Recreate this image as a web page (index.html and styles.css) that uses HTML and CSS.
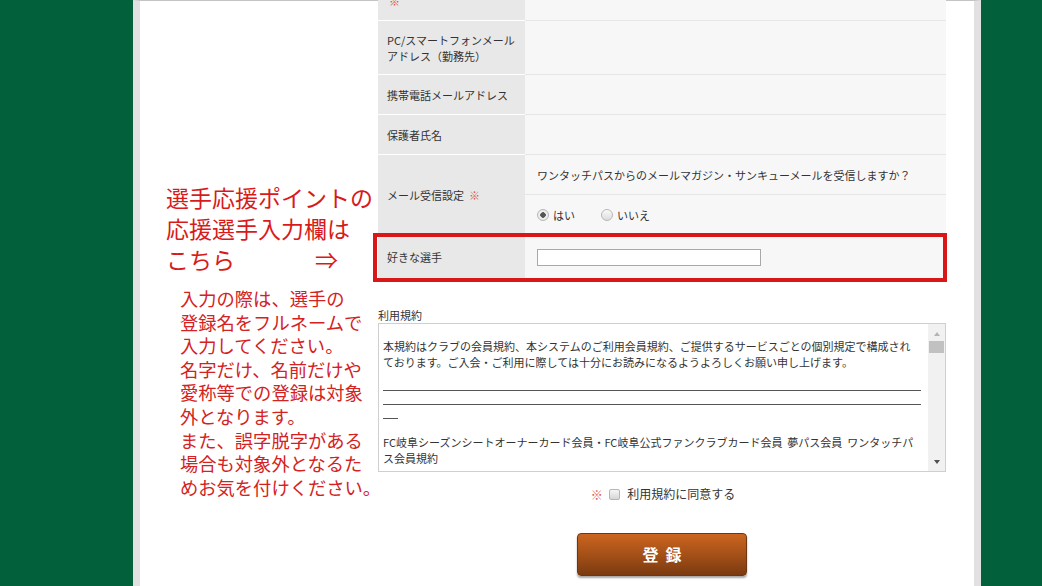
FILE: index.html
```html
<!DOCTYPE html>
<html lang="ja">
<head>
  <meta charset="utf-8">
  <title>会員登録</title>
  <link rel="stylesheet" href="styles.css">
</head>
<body>
  <div class="page">
    <div class="note">
      <p class="note-head">選手応援ポイントの<br>応援選手入力欄は<br>こちら<span class="arrow">⇒</span></p>
      <p class="note-body">入力の際は、選手の<br>登録名をフルネームで<br>入力してください。<br>名字だけ、名前だけや<br>愛称等での登録は対象<br>外となります。<br>また、誤字脱字がある<br>場合も対象外となるた<br>めお気を付けください。</p>
    </div>

    <div class="form">
      <div class="rows">
        <div class="row row-cut">
          <div class="th"><span class="req">※</span></div>
          <div class="td"></div>
        </div>
        <div class="row row-tall">
          <div class="th">PC/スマートフォンメール<br>アドレス（勤務先）</div>
          <div class="td"></div>
        </div>
        <div class="row">
          <div class="th">携帯電話メールアドレス</div>
          <div class="td"></div>
        </div>
        <div class="row">
          <div class="th">保護者氏名</div>
          <div class="td"></div>
        </div>
        <div class="row row-mail">
          <div class="th">メール受信設定<span class="req req-gap">※</span></div>
          <div class="td td-split">
            <div class="sub">ワンタッチパスからのメールマガジン・サンキューメールを受信しますか？</div>
            <div class="sub">
              <label class="radio"><input type="radio" name="mail" checked>はい</label>
              <label class="radio"><input type="radio" name="mail">いいえ</label>
            </div>
          </div>
        </div>
        <div class="row row-player">
          <div class="th">好きな選手</div>
          <div class="td"><input type="text" class="text-input"></div>
        </div>
      </div>

      <div class="terms-label">利用規約</div>
      <div class="terms">
        <div class="terms-text">
          <p class="terms-intro">本規約はクラブの会員規約、本システムのご利用会員規約、ご提供するサービスごとの個別規定で構成され<br>ております。ご入会・ご利用に際しては十分にお読みになるようよろしくお願い申し上げます。</p>
          <div class="rule"></div>
          <div class="rule"></div>
          <div class="rule rule-short"></div>
          <p class="terms-title">FC岐阜シーズンシートオーナーカード会員・FC岐阜公式ファンクラブカード会員&nbsp;&nbsp;夢パス会員&nbsp;&nbsp;ワンタッチパ<br>ス会員規約</p>
        </div>
        <div class="scrollbar">
          <span class="arrow-up"></span>
          <span class="thumb"></span>
          <span class="track"></span>
          <span class="arrow-down"></span>
        </div>
      </div>

      <div class="agree">
        <span class="req">※</span>
        <label><input type="checkbox" class="check">利用規約に同意する</label>
      </div>

      <button class="submit">登録</button>
    </div>
  </div>
</body>
</html>
```

FILE: styles.css
```css
body {
  margin: 0;
  height: 586px;
  overflow: hidden;
  background-color: #02613b;
  font-family: "Noto Sans CJK JP", "Liberation Sans", sans-serif;
  color: #333;
}
p {
  margin: 0;
}
.page {
  box-sizing: border-box;
  width: 848px;
  height: 586px;
  margin-left: 133px;
  background-color: #fff;
  border-left: 7px solid #e1e1e1;
  border-right: 7px solid #e1e1e1;
  border-top: 1px solid #c4c4c4;
  display: grid;
  grid-template-columns: 238px 568px;
}

/* left red notes */
.note {
  padding-top: 181px;
}
.note-head {
  margin-left: 26px;
  font-size: 23px;
  line-height: 31px;
  color: #d91a1a;
}
.arrow {
  margin-left: 80px;
}
.note-body {
  margin-top: 12px;
  margin-left: 40px;
  font-size: 18.3px;
  line-height: 23.6px;
  color: #d42222;
  white-space: nowrap;
}

/* form table */
.rows {
  margin-top: -20px;
}
.row {
  display: grid;
  grid-template-columns: 147px 421px;
  height: 40px;
  font-size: 11px;
}
.th {
  box-sizing: border-box;
  background-color: #e8e8e8;
  border-bottom: 1px solid #fff;
  padding-left: 9px;
  display: flex;
  align-items: center;
  line-height: 16px;
}
.td {
  box-sizing: border-box;
  background-color: #f7f7f7;
  border-bottom: 1px solid #e6e6e6;
  padding-left: 12px;
  display: flex;
  align-items: center;
}
.row-tall {
  height: 54px;
}
.row-mail {
  height: 80px;
}
.row-player {
  height: 45px;
  position: relative;
}
.row-player::after {
  content: "";
  position: absolute;
  left: -5px;
  right: -1px;
  top: -2px;
  bottom: -2px;
  border: 4px solid #d81818;
}
.req {
  color: #e05353;
  margin-left: 2px;
}
.req-gap {
  margin-left: 5px;
}
.td-split {
  display: block;
  padding-left: 0;
  border-bottom: none;
}
.sub {
  box-sizing: border-box;
  height: 40px;
  padding-left: 12px;
  display: flex;
  align-items: center;
  border-bottom: 1px solid #e6e6e6;
}
.radio {
  display: inline-flex;
  align-items: center;
  margin-right: 26px;
}
.radio input {
  appearance: none;
  width: 12px;
  height: 12px;
  margin: 0 4px 0 0;
  border: 1px solid #b8b8b8;
  border-radius: 50%;
  background: linear-gradient(#fafafa, #dcdcdc);
}
.radio input:checked {
  background: radial-gradient(circle, #555 0, #555 2.5px, #f2f2f2 3px, #dedede 100%);
}
.text-input {
  box-sizing: border-box;
  width: 224px;
  height: 17px;
  margin: 0;
  border: 1px solid #a9a9a9;
  background: #fff;
}

/* terms box */
.terms-label {
  margin-top: 28px;
  font-size: 11px;
  line-height: 15px;
}
.terms {
  box-sizing: border-box;
  height: 149px;
  display: flex;
  border: 1px solid #cfcfcf;
}
.terms-text {
  flex: 1;
  overflow: hidden;
  padding: 0 7px 0 4px;
  font-size: 11px;
  line-height: 16px;
  white-space: nowrap;
}
.terms-intro {
  margin-top: 14px;
}
.rule {
  border-top: 1px solid #555;
  margin-top: 13px;
}
.rule:first-of-type {
  margin-top: 20px;
}
.rule-short {
  width: 15px;
}
.terms-title {
  margin-top: 15px;
}
.scrollbar {
  width: 17px;
  background-color: #f1f1f1;
  display: flex;
  flex-direction: column;
  align-items: center;
  padding: 8px 0 7px;
  box-sizing: border-box;
}
.arrow-up {
  width: 0;
  height: 0;
  border-left: 3.5px solid transparent;
  border-right: 3.5px solid transparent;
  border-bottom: 4px solid #b4b4b4;
}
.thumb {
  width: 15px;
  height: 12px;
  margin-top: 5px;
  background-color: #c1c1c1;
}
.track {
  flex: 1;
}
.arrow-down {
  width: 0;
  height: 0;
  border-left: 3.5px solid transparent;
  border-right: 3.5px solid transparent;
  border-top: 4px solid #505050;
}

/* agree + submit */
.agree {
  margin-top: 14px;
  text-align: center;
  font-size: 12px;
  line-height: 16px;
}
.agree label {
  display: inline-flex;
  align-items: center;
}
.check {
  appearance: none;
  width: 11px;
  height: 11px;
  margin: 0 7px 0 4px;
  border: 1px solid #b5b5b5;
  border-radius: 2px;
  background: linear-gradient(#f6f6f6, #d6d6d6);
}
.submit {
  display: block;
  width: 170px;
  height: 43px;
  margin: 30px auto 0;
  padding: 0 0 0 7px;
  border: 1px solid #6e3610;
  border-radius: 4px;
  background: linear-gradient(#cb6520, #a14e17 55%, #7a3a10);
  box-shadow: 0 2px 2px rgba(0, 0, 0, 0.35);
  color: #fff;
  font-family: "Noto Sans CJK JP", sans-serif;
  font-size: 16px;
  font-weight: bold;
  letter-spacing: 7px;
}
```
